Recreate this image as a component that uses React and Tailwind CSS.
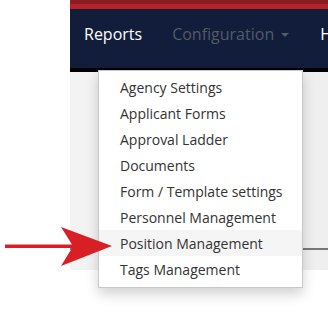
// App.jsx
const items = [
  'Agency Settings',
  'Applicant Forms',
  'Approval Ladder',
  'Documents',
  'Form / Template settings',
  'Personnel Management',
  'Position Management',
  'Tags Management',
];

function App() {
  return (
    <div className="relative h-[312px] w-[328px] overflow-hidden bg-white font-['Open_Sans',sans-serif]">
      <div className="ml-[70px] flex flex-col">
        {/* top strip */}
        <div className="h-[4px] bg-[#8a1c22]" />
        <div className="h-[5px] bg-[#b72227]" />

        {/* navbar */}
        <nav className="flex h-[59px] items-center whitespace-nowrap bg-[#121c3b] pb-[10px] pl-[14px] text-[16px]">
          <span className="text-white">Reports</span>
          <span className="ml-[30px] flex items-center text-[#555a66]">
            Configuration
            <span className="ml-[7px] mt-[2px] h-0 w-0 border-x-[4px] border-t-[4px] border-x-transparent border-t-[#555a66]" />
          </span>
          <span className="ml-[31px] text-white">Home</span>
        </nav>
        <div className="h-[4px] bg-black" />

        {/* page body */}
        <div className="h-[198px] bg-gradient-to-r from-[#f3f3f3] to-[#efefef] pt-[176px]">
          <div className="h-[2px] bg-[#777777]" />
        </div>
      </div>

      {/* dropdown menu */}
      <ul className="absolute left-[98px] top-[70px] w-[205px] border border-[#c8c8c8] bg-white pb-[5px] pt-[3px] text-[14px] text-[#333333] shadow-[0_6px_12px_rgba(0,0,0,0.18)]">
        {items.map((item) => (
          <li
            key={item}
            className={`flex h-[26px] items-center whitespace-nowrap pl-[21px] ${item === 'Position Management' ? 'bg-[#f5f5f5]' : ''}`}
          >
            {item}
          </li>
        ))}
      </ul>

      {/* red arrow */}
      <svg className="absolute left-[4px] top-[225px]" width="110" height="44" viewBox="0 0 110 44">
        <path d="M1 19.5 H68 L57 2 L108 21 L57 41 L68 23 H1 Z" fill="#d91f26" />
      </svg>
    </div>
  );
}

export default App;
